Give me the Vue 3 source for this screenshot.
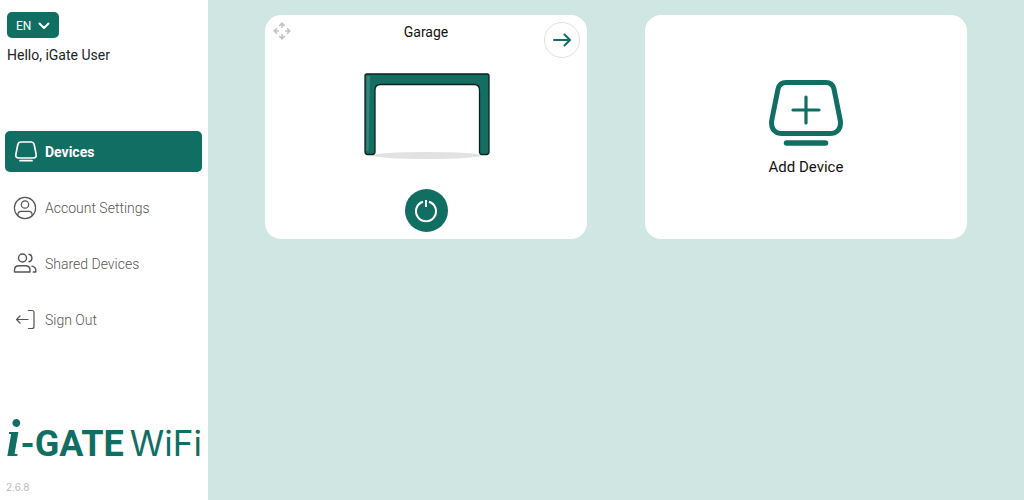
<script setup>
import { ref } from 'vue'

const active = ref('Devices')
const items = [
  { name: 'Devices', icon: 'device' },
  { name: 'Account Settings', icon: 'account' },
  { name: 'Shared Devices', icon: 'shared' },
  { name: 'Sign Out', icon: 'out' },
]
</script>

<template>
  <div class="app">
    <aside class="sidebar">
      <header class="top">
        <button class="lang" type="button" aria-label="Language: EN">
          <span>EN</span>
          <svg width="12" height="8" viewBox="0 0 12 8"><path d="M1.500 1.500 6 6l4.500-4.500" fill="none" stroke="currentColor" stroke-width="2" stroke-linecap="round" stroke-linejoin="round" /></svg>
        </button>
        <p class="hello">Hello, iGate User</p>
      </header>

      <nav class="menu">
        <a
          v-for="item in items"
          :key="item.name"
          href="#"
          :class="['item', { active: active === item.name }]"
          @click.prevent="active = item.name"
        >
          <svg class="icon" viewBox="0 0 24 24" fill="none" stroke="currentColor" stroke-linecap="round" stroke-linejoin="round">
            <template v-if="item.icon === 'device'">
              <path d="M7.500 2h11c1.500 0 2.200.8 2.600 2.200l2 10c.5 2.200-.6 3.800-2.700 3.800H5.600c-2.100 0-3.200-1.600-2.700-3.800l2-10C5.300 2.800 6 2 7.500 2z" stroke-width="1.700" />
              <path d="M7 20.700h12" stroke-width="1.700" />
            </template>
            <template v-else-if="item.icon === 'account'">
              <circle cx="12" cy="12" r="10.600" stroke-width="1.200" />
              <circle cx="12" cy="8.500" r="3.700" stroke-width="1.200" />
              <path d="M4.900 19.700v-1c0-2 1.300-3.400 3.300-3.400h7.600c2 0 3.300 1.400 3.300 3.400v1" stroke-width="1.200" />
            </template>
            <template v-else-if="item.icon === 'shared'">
              <g stroke-width="1.400">
                <circle cx="9.500" cy="6" r="4" />
                <path d="M1.500 20v-2c0-2.600 1.800-4.200 4.400-4.200h6.700c2.600 0 4.400 1.600 4.400 4.200v2zM16 2.300c3.900.5 3.900 6.900 0 7.400M19 14.100c2.400.5 3.800 2 3.800 4.100V20h-2.600" />
              </g>
            </template>
            <template v-else>
              <path d="M15.500 2.500h3.500c1.400 0 2 .6 2 2v14c0 1.400-.6 2-2 2h-3.500M15 11.500H3.500M7 8l-3.500 3.500L7 15" stroke-width="1.200" />
            </template>
          </svg>
          <span>{{ item.name }}</span>
        </a>
      </nav>

      <footer class="bottom">
        <div class="logo"><span class="logo-i">i</span><span class="logo-gate">-GATE</span><span class="logo-wifi">WiFi</span></div>
        <small class="version">2.6.8</small>
      </footer>
    </aside>

    <main class="main">
      <article class="card">
        <button class="drag" type="button" aria-label="Move device">
          <svg width="18" height="18" viewBox="0 0 18 18" fill="none" stroke="#c2c4c4" stroke-width="1.600"><path d="M9 6V1.500M6.200 4 9 1.200 11.800 4M9 12v4.500M6.200 14 9 16.800l2.800-2.800M6 9H1.500M4 6.200 1.200 9 4 11.800M12 9h4.500M14 6.200 16.800 9 14 11.800" /></svg>
        </button>
        <h2 class="name">Garage</h2>
        <button class="open" type="button" aria-label="Open Garage">
          <svg width="20" height="16" viewBox="0 0 20 16" fill="none" stroke="#116e62" stroke-width="2" stroke-linecap="round" stroke-linejoin="round"><path d="M2 8h16M12.500 2.500 18 8l-5.500 5.500" /></svg>
        </button>
        <svg class="gate" width="128" height="88" viewBox="0 0 128 88">
          <ellipse cx="65" cy="82.500" rx="55" ry="3.500" fill="#e2e2e2" />
          <path d="M4.500 1h121a1.500 1.500 0 0 1 1.500 1.500V79a2.500 2.500 0 0 1-2.500 2.500H120a2.500 2.500 0 0 1-2.500-2.500V17q0-5.500-5.500-5.500H18.500Q13 11.500 13 17v62a2.500 2.500 0 0 1-2.500 2.500h-5A2.500 2.500 0 0 1 3 79V2.500A1.500 1.500 0 0 1 4.500 1z" fill="#146f63" stroke="#10201f" stroke-width="1.300" />
          <path d="M4.500 78V3H8L6.500 78z" fill="#36857a" />
        </svg>
        <button class="power" type="button" aria-label="Operate Garage">
          <svg width="24" height="24" viewBox="0 0 24 24" fill="none" stroke="#fff" stroke-width="2"><path d="M9 2.700a10 10 0 1 0 6 0M12 1v7" /></svg>
        </button>
      </article>

      <button class="card add" type="button">
        <svg width="76" height="68" viewBox="0 0 76 68" fill="none" stroke="#116e62" stroke-linecap="round" stroke-linejoin="round">
          <path d="M18 3.500h40c4.500 0 7 2.500 8 6.500l6 30c2 9-2.500 14.500-10.500 14.500h-47C6.500 54.500 2 49 4 40l6-30c1-4 3.500-6.500 8-6.500z" stroke-width="5" />
          <path d="M38 18v26M25 31h26" stroke-width="3.200" />
          <path d="M18.500 64h39" stroke-width="5.500" />
        </svg>
        <span>Add Device</span>
      </button>
    </main>
  </div>
</template>

<style>
body {
  margin: 0;
}
</style>

<style scoped>
.app {
  display: flex;
  min-height: 100vh;
  background: #d0e6e2;
  font-family: Roboto, "Liberation Sans", sans-serif;
  color: #222;
}
button {
  font: inherit;
  padding: 0;
  border: 0;
  cursor: pointer;
}
svg {
  display: block;
}
.sidebar {
  display: flex;
  flex-direction: column;
  flex: 0 0 208px;
  box-sizing: border-box;
  background: #fff;
}
.top {
  padding: 12px 7px 0;
}
.lang {
  display: flex;
  align-items: center;
  gap: 7px;
  height: 26px;
  padding: 2px 9px 0;
  border-radius: 5px;
  background: #116e62;
  color: #fff;
  font-size: 12px;
}
.hello {
  margin: 7px 0 0;
  font-size: 14px;
  line-height: 20px;
}
.menu {
  display: flex;
  flex-direction: column;
  gap: 15px;
  margin-top: 66px;
  padding: 0 6px 0 5px;
}
.item {
  display: flex;
  align-items: center;
  gap: 8px;
  height: 41px;
  padding: 0 8px;
  border-radius: 5px;
  color: #555;
  font-size: 14px;
  font-weight: 300;
  text-decoration: none;
}
.item.active {
  background: #116e62;
  color: #fff;
  font-weight: 700;
}
.icon {
  width: 24px;
  height: 24px;
}
.bottom {
  margin-top: auto;
  padding: 0 6px 6px;
  color: #116e62;
}
.logo {
  display: flex;
  align-items: baseline;
  font-size: 36px;
  line-height: 52px;
  white-space: nowrap;
}
.logo-i {
  font: italic 700 52px/52px "Liberation Serif", serif;
}
.logo-gate {
  font-weight: 700;
}
.logo-wifi {
  margin-left: 6px;
  font-family: Inter, sans-serif;
  font-size: 35px;
}
.version {
  display: block;
  margin-top: 10px;
  color: #bbb;
  font-family: Inter, sans-serif;
  font-size: 10px;
  line-height: 14px;
}
.main {
  display: grid;
  flex: 1;
  grid-template-columns: repeat(2, minmax(0, 1fr));
  align-content: start;
  gap: 58px;
  padding: 15px 57px;
}
.card {
  display: grid;
  grid-template-columns: 38px 1fr 38px;
  justify-items: center;
  align-items: start;
  box-sizing: border-box;
  min-height: 224px;
  padding: 7px 7px;
  border-radius: 16px;
  background: #fff;
}
.drag {
  justify-self: start;
  padding: 0 1px;
  background: none;
}
.name {
  margin: 0;
  font-size: 14px;
  font-weight: 400;
  line-height: 20px;
  color: #111;
}
.open {
  display: grid;
  place-items: center;
  justify-self: end;
  width: 36px;
  height: 36px;
  border: 1px solid #dedfe2;
  border-radius: 50%;
  background: #fff;
  box-sizing: border-box;
}
.gate {
  grid-column: 1 / -1;
  margin-top: 15px;
}
.power {
  display: grid;
  place-items: center;
  grid-column: 1 / -1;
  width: 43px;
  height: 43px;
  margin-top: 28px;
  border-radius: 50%;
  background: #116e62;
}
.add {
  display: flex;
  flex-direction: column;
  align-items: center;
  justify-content: center;
  gap: 10px;
  padding-top: 9px;
  color: #111;
  font-size: 15px;
  line-height: 20px;
}
</style>
